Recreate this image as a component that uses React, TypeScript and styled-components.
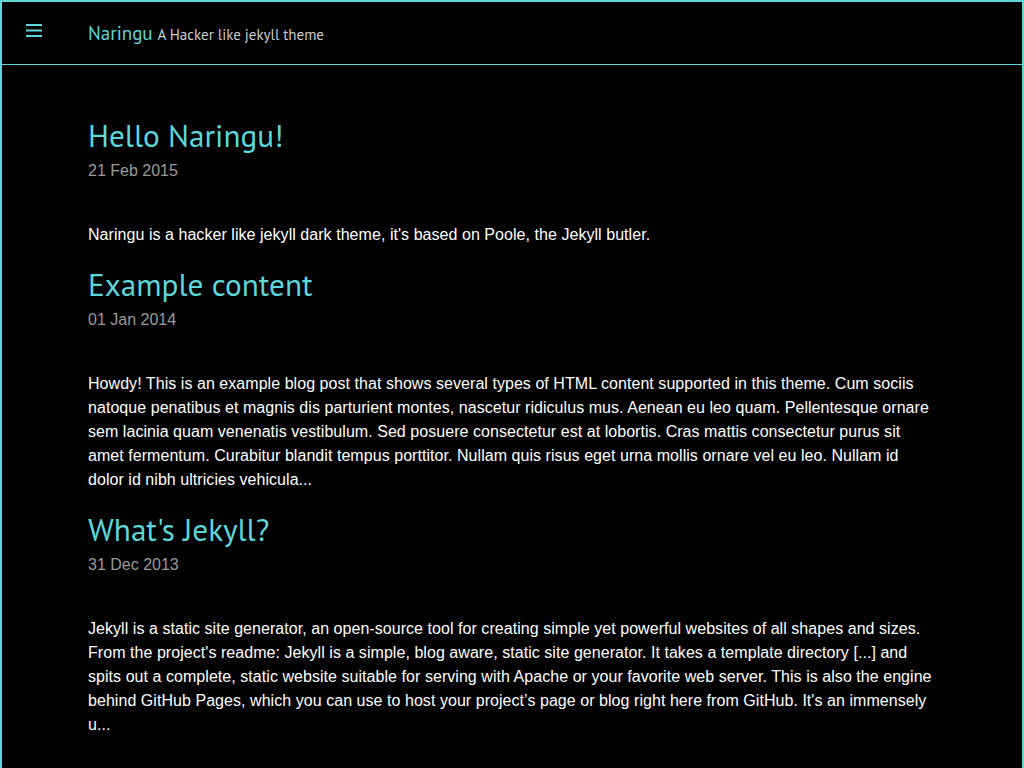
import styled, { createGlobalStyle } from "styled-components";

const cyan = "#5fd6d8";

const posts = [
  {
    title: "Hello Naringu!",
    date: "21 Feb 2015",
    excerpt:
      "Naringu is a hacker like jekyll dark theme, it's based on Poole, the Jekyll butler.",
  },
  {
    title: "Example content",
    date: "01 Jan 2014",
    excerpt:
      "Howdy! This is an example blog post that shows several types of HTML content supported in this theme. Cum sociis natoque penatibus et magnis dis parturient montes, nascetur ridiculus mus. Aenean eu leo quam. Pellentesque ornare sem lacinia quam venenatis vestibulum. Sed posuere consectetur est at lobortis. Cras mattis consectetur purus sit amet fermentum. Curabitur blandit tempus porttitor. Nullam quis risus eget urna mollis ornare vel eu leo. Nullam id dolor id nibh ultricies vehicula...",
  },
  {
    title: "What's Jekyll?",
    date: "31 Dec 2013",
    excerpt:
      "Jekyll is a static site generator, an open-source tool for creating simple yet powerful websites of all shapes and sizes. From the project's readme: Jekyll is a simple, blog aware, static site generator. It takes a template directory [...] and spits out a complete, static website suitable for serving with Apache or your favorite web server. This is also the engine behind GitHub Pages, which you can use to host your project\u2019s page or blog right here from GitHub. It's an immensely u...",
  },
];

export default function App() {
  return (
    <>
      <GlobalStyle />
      <Page>
        <Masthead>
          <MenuButton aria-label="menu">
            <svg width="16" height="13" viewBox="0 0 16 13">
              <rect x="0" y="0" width="16" height="2" fill={cyan} />
              <rect x="0" y="5.5" width="16" height="2" fill={cyan} />
              <rect x="0" y="11" width="16" height="2" fill={cyan} />
            </svg>
          </MenuButton>
          <Brand>
            <BrandName href="#">Naringu</BrandName>
            <Tagline>A Hacker like jekyll theme</Tagline>
          </Brand>
        </Masthead>

        <Main>
          {posts.map((post) => (
            <Post key={post.title}>
              <PostTitle href="#">{post.title}</PostTitle>
              <PostDate>{post.date}</PostDate>
              <Excerpt>{post.excerpt}</Excerpt>
            </Post>
          ))}
        </Main>
      </Page>
    </>
  );
}

const GlobalStyle = createGlobalStyle`
  html, body {
    margin: 0;
    padding: 0;
    background: #000;
  }

  body {
    font-family: "Liberation Sans", Arial, sans-serif;
    color: #fff;
  }
`;

const Page = styled.div`
  min-height: 100vh;
  box-sizing: border-box;

  border: 2px solid ${cyan};
  border-bottom: none;

  background: #000;
`;

const Masthead = styled.header`
  height: 62px;

  display: flex;
  align-items: center;

  border-bottom: 1px solid ${cyan};
`;

const MenuButton = styled.div`
  width: 86px;
  height: 100%;

  display: flex;
  align-items: flex-start;

  padding: 22px 0 0 24px;
  box-sizing: border-box;

  svg {
    display: block;
  }
`;

const Brand = styled.div`
  display: flex;
  align-items: baseline;
  gap: 5px;

  font-family: "PT Sans", "Noto Sans", sans-serif;
`;

const BrandName = styled.a`
  font-size: 19px;
  color: ${cyan};
  text-decoration: none;
`;

const Tagline = styled.span`
  font-size: 15px;
  color: #cccccc;
`;

const Main = styled.main`
  display: flex;
  flex-direction: column;
  gap: 18px;

  padding: 51px 86px 40px 86px;
`;

const Post = styled.article`
  display: flex;
  flex-direction: column;
`;

const PostTitle = styled.a`
  font-family: "PT Sans", "Noto Sans", sans-serif;
  font-size: 31.2px;
  line-height: 40px;

  color: ${cyan};
  text-decoration: none;
`;

const PostDate = styled.span`
  margin-top: 3px;

  font-size: 16px;
  line-height: 24px;

  color: #9a9a9a;
`;

const Excerpt = styled.p`
  margin: 40px 0 0;

  font-size: 16px;
  line-height: 24px;
  letter-spacing: 0.05px;

  color: #fff;
`;
